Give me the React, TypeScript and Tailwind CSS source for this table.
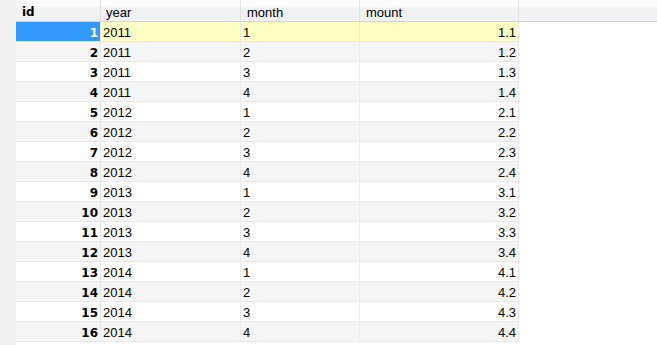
import React from "react";

const rows = [
  [1, 2011, 1, "1.1"],
  [2, 2011, 2, "1.2"],
  [3, 2011, 3, "1.3"],
  [4, 2011, 4, "1.4"],
  [5, 2012, 1, "2.1"],
  [6, 2012, 2, "2.2"],
  [7, 2012, 3, "2.3"],
  [8, 2012, 4, "2.4"],
  [9, 2013, 1, "3.1"],
  [10, 2013, 2, "3.2"],
  [11, 2013, 3, "3.3"],
  [12, 2013, 4, "3.4"],
  [13, 2014, 1, "4.1"],
  [14, 2014, 2, "4.2"],
  [15, 2014, 3, "4.3"],
  [16, 2014, 4, "4.4"],
];

export default function App() {
  return (
    <div
      className="flex w-[657px] h-[345px] bg-white overflow-hidden text-[13px] text-black"
      style={{ fontFamily: '"Liberation Sans", Arial, sans-serif' }}
    >
      <div className="w-[16px] shrink-0 bg-[#f0f0f0]" />
      <div className="flex flex-col flex-1">
        <div className="flex h-[22px] border-b border-[#d4d4d4] bg-[linear-gradient(#fbfbfc_0,#fbfbfc_35%,#f0f1f3_36%,#f0f1f3_100%)]">
          <div
            className="w-[85px] border-r border-[#e2e2e2] pl-[6px] pt-[5px] font-bold leading-[15px]"
            style={{ fontFamily: '"DejaVu Sans", Verdana, sans-serif', fontSize: "12px" }}
          >
            id
          </div>
          <div className="w-[140px] border-r border-[#e2e2e2] pl-[5px] pt-[5px] leading-[15px]">year</div>
          <div className="w-[119px] border-r border-[#e2e2e2] pl-[6px] pt-[5px] leading-[15px]">month</div>
          <div className="w-[159px] border-r border-[#e2e2e2] pl-[6px] pt-[5px] leading-[15px]">mount</div>
          <div className="flex-1" />
        </div>
        {rows.map((r, i) => {
          const sel = i === 0;
          const bg = sel ? "bg-[#ffffc4]" : i % 2 === 1 ? "bg-[#f5f5f5]" : "bg-white";
          return (
            <div key={i} className="flex h-[20px]">
              <div
                className={
                  "w-[85px] h-[20px] border-r border-b border-[#e8e8e8] pr-[2px] pt-[3px] text-right font-bold leading-[16px] " +
                  (sel ? "bg-[#3399ff] text-white" : bg)
                }
                style={{ fontFamily: '"DejaVu Sans", Verdana, sans-serif', fontSize: "12px" }}
              >
                {r[0]}
              </div>
              <div className={"w-[140px] h-[20px] border-r border-b border-[#ebebeb] pl-[2px] pt-[3px] leading-[16px] " + bg}>
                {r[1]}
              </div>
              <div className={"w-[119px] h-[20px] border-r border-b border-[#ebebeb] pl-[2px] pt-[3px] leading-[16px] " + bg}>
                {r[2]}
              </div>
              <div className={"w-[159px] h-[20px] border-r border-b border-[#ebebeb] pr-[2px] pt-[3px] text-right leading-[16px] " + bg}>
                {r[3]}
              </div>
              <div className="flex-1" />
            </div>
          );
        })}
      </div>
    </div>
  );
}
